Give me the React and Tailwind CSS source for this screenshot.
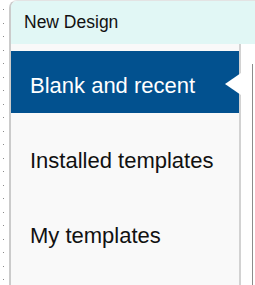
export default function App() {
  const items = ["Blank and recent", "Installed templates", "My templates"];
  const active = 0;

  return (
    <div
      className="flex h-[285px] w-[255px] overflow-hidden bg-white text-[#111]"
      style={{ fontFamily: '"Liberation Sans", Arial, sans-serif' }}
    >
      {/* dotted gutter */}
      <div className="flex w-[9px] flex-col items-center gap-[12.5px] pt-[9px] pr-[3px]">
        {Array.from({ length: 21 }).map((_, i) => (
          <div key={i} className="h-px w-px shrink-0 bg-[#8a8a8a]" />
        ))}
      </div>

      <div className="flex flex-1 flex-col rounded-tl-[8px] border-l-2 border-t border-[#cbcbcb] border-t-[#e3e3e3]">
        <div className="flex h-[43px] items-center rounded-tl-[6px] bg-[#e1f7f5] pl-[13px] pb-[1px]">
          <span className="text-[17.5px]">New Design</span>
        </div>

        <div className="flex flex-1">
          <div className="flex w-[230px] flex-col gap-[13px] border-r-2 border-[#d2d2d2] bg-[#f9f9f9] pt-[7px]">
            {items.map((label, i) => (
              <div
                key={label}
                className={
                  i === active
                    ? "relative flex h-[62px] items-center bg-[#02518f] pl-[19px] pt-[6px] text-white"
                    : "relative flex h-[62px] items-center pl-[19px] pt-[6px]"
                }
              >
                <span className="text-[22px]">{label}</span>
                {i === active && (
                  <div className="absolute right-[-2px] top-[22px] h-0 w-0 border-y-[11px] border-r-[16px] border-y-transparent border-r-white" />
                )}
              </div>
            ))}
          </div>

          <div className="flex flex-1 pl-[11px] pt-[20px]">
            <div className="w-px bg-[#8c8c8c]" />
          </div>
        </div>
      </div>
    </div>
  );
}
